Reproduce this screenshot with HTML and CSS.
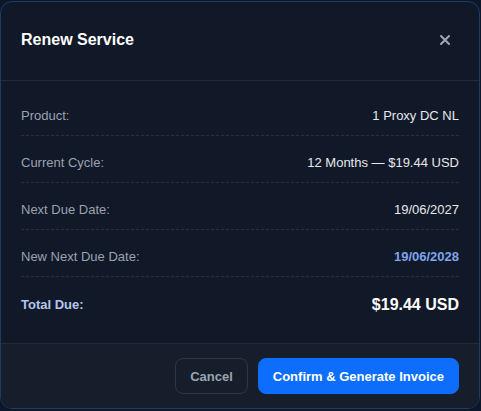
FILE: index.html
```html
<!DOCTYPE html>
<html lang="en">
<head>
<meta charset="utf-8">
<title>Renew Service</title>
<link rel="stylesheet" href="styles.css">
</head>
<body>
<div class="modal">
  <div class="modal-header">
    <h2 class="modal-title">Renew Service</h2>
    <button class="close-btn" aria-label="Close">
      <svg width="12" height="12" viewBox="0 0 12 12"><path d="M2 2 L10 10 M10 2 L2 10" stroke="#a0a8b6" stroke-width="2" stroke-linecap="round"/></svg>
    </button>
  </div>
  <div class="modal-body">
    <div class="row"><span class="label">Product:</span><span class="value">1 Proxy DC NL</span></div>
    <div class="row"><span class="label">Current Cycle:</span><span class="value">12 Months — $19.44 USD</span></div>
    <div class="row"><span class="label">Next Due Date:</span><span class="value">19/06/2027</span></div>
    <div class="row"><span class="label">New Next Due Date:</span><span class="value value-new">19/06/2028</span></div>
    <div class="row row-total"><span class="label label-total">Total Due:</span><span class="value value-total">$19.44 USD</span></div>
  </div>
  <div class="modal-footer">
    <button class="btn btn-cancel">Cancel</button>
    <button class="btn btn-primary">Confirm &amp; Generate Invoice</button>
  </div>
</div>
</body>
</html>
```
FILE: styles.css
```css
* { box-sizing: border-box; }
html, body { height: 100%; }
body {
  margin: 0;
  padding: 1px 1px 1px 0;
  background: #0c1729;
  font-family: "Liberation Sans", Arial, sans-serif;
}
.modal {
  width: 480px;
  height: 408px;
  background: #111827;
  border: 1px solid #1f3a63;
  border-radius: 12px;
  overflow: hidden;
  display: flex;
  flex-direction: column;
}
.modal-header {
  display: flex;
  align-items: center;
  justify-content: space-between;
  padding: 26px 20px 28px 20px;
  border-bottom: 1px solid #232c3b;
}
.modal-title {
  margin: 0;
  font-size: 16px;
  line-height: 24px;
  font-weight: 700;
  color: #ffffff;
}
.close-btn {
  width: 28px;
  height: 24px;
  padding: 0;
  border: 0;
  background: transparent;
  display: flex;
  align-items: center;
  justify-content: center;
}
.modal-body {
  padding: 8px 20px 19px 20px;
  flex: 1;
}
.row {
  display: flex;
  justify-content: space-between;
  align-items: center;
  padding: 17px 0 9px 0;
  border-bottom: 1px dashed #273040;
  font-size: 13px;
  line-height: 20px;
}
.row-total { border-bottom: 0; padding-top: 18px; }
.label { color: #9aa3b1; }
.value { color: #e6e8ec; font-weight: 500; }
.value-new { color: #7ea4ee; font-weight: 700; }
.label-total { color: #b4c6ee; font-weight: 700; }
.value-total { color: #ffffff; font-weight: 700; font-size: 16px; }
.modal-footer {
  background: #161d2b;
  border-top: 1px solid #232c3b;
  padding: 14px 20px 15px 20px;
  display: flex;
  justify-content: flex-end;
  gap: 10px;
}
.btn {
  height: 36px;
  padding: 0 14px;
  border-radius: 8px;
  font-family: "Liberation Sans", Arial, sans-serif;
  font-size: 13px;
  font-weight: 700;
  cursor: pointer;
}
.btn-cancel {
  background: transparent;
  border: 1px solid #2e3746;
  color: #9aa3b1;
}
.btn-primary {
  background: #0d6efd;
  border: 1px solid #0d6efd;
  color: #ffffff;
}
```
